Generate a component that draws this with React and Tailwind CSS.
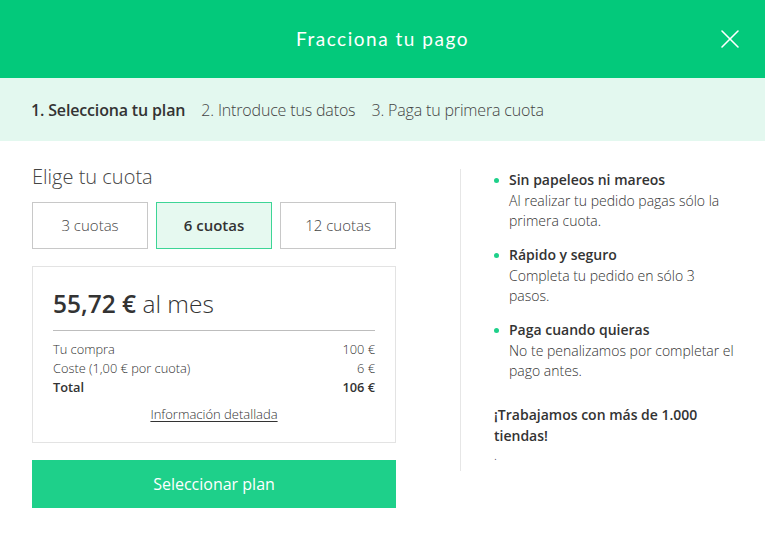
import { X } from "lucide-react";

const points = [
  {
    title: "Sin papeleos ni mareos",
    text: "Al realizar tu pedido pagas sólo la primera cuota.",
  },
  {
    title: "Rápido y seguro",
    text: "Completa tu pedido en sólo 3 pasos.",
  },
  {
    title: "Paga cuando quieras",
    text: "No te penalizamos por completar el pago antes.",
  },
];

function PlanOption({ label, active }) {
  return (
    <div
      className={
        active
          ? "flex h-[47px] w-[116px] items-center justify-center border border-[#3dd596] bg-[#e6f9f0] text-[15px] font-semibold text-[#333]"
          : "flex h-[47px] w-[116px] items-center justify-center border border-[#c8c8c8] bg-white text-[15px] font-light text-[#444]"
      }
    >
      {label}
    </div>
  );
}

function Row({ label, value, bold }) {
  return (
    <div
      className={
        "flex justify-between text-[12.8px] leading-[19px] text-[#333] " +
        (bold ? "font-semibold" : "font-light")
      }
    >
      <span>{label}</span>
      <span>{value}</span>
    </div>
  );
}

export default function App() {
  return (
    <div className="h-[545px] w-[765px] bg-white font-['Open_Sans',sans-serif] text-[#333]">
      <div className="relative flex h-[78px] items-center justify-center bg-[#03c97b]">
        <h1 className="font-['Lato',sans-serif] text-[19px] tracking-[0.08em] text-white">
          Fracciona tu pago
        </h1>
        <button className="absolute right-[19px] top-[23px] text-white">
          <X size={32} strokeWidth={1.2} />
        </button>
      </div>

      <div className="flex h-[63px] items-center gap-[16px] bg-[#e3f8ef] px-[31px] text-[16px] tracking-[-0.01em] text-[#444]">
        <span className="font-semibold text-[#333]">1. Selecciona tu plan</span>
        <span className="font-light">2. Introduce tus datos</span>
        <span className="font-light">3. Paga tu primera cuota</span>
      </div>

      <div className="flex pl-[32px] pt-[22px]">
        <div className="w-[364px]">
          <h2 className="text-[20px] font-light leading-[28px] text-[#444]">Elige tu cuota</h2>
          <div className="mt-[11px] flex justify-between">
            <PlanOption label="3 cuotas" />
            <PlanOption label="6 cuotas" active />
            <PlanOption label="12 cuotas" />
          </div>

          <div className="mt-[17px] h-[177px] border border-[#e3e3e3] px-[20px] pt-[20px]">
            <div className="border-b border-[#bdbdbd] pb-[9px] text-[24.5px] leading-[34px] text-[#333]">
              <span className="font-semibold">55,72 €</span>{" "}
              <span className="font-light">al mes</span>
            </div>
            <div className="mt-[9px]">
              <Row label="Tu compra" value="100 €" />
              <Row label="Coste (1,00 € por cuota)" value="6 €" />
              <Row label="Total" value="106 €" bold />
            </div>
            <div className="mt-[8px] text-center text-[13px] font-light">
              <a className="underline underline-offset-2">Información detallada</a>
            </div>
          </div>

          <button className="mt-[17px] h-[48px] w-full bg-[#1ed08a] text-[16px] font-medium text-white">
            Seleccionar plan
          </button>
        </div>

        <div className="ml-[64px] mt-[6px] h-[302px] border-l border-[#e6e6e6] pl-[33px] pr-[20px]">
          <ul className="flex flex-col gap-[13px]">
            {points.map((p) => (
              <li key={p.title} className="flex">
                <span className="mr-[10px] mt-[9px] h-[5px] w-[5px] shrink-0 rounded-full bg-[#1ed08a]" />
                <div className="w-[228px]">
                  <div className="text-[14px] font-semibold leading-[22px]">{p.title}</div>
                  <div className="text-[14px] font-light leading-[20px] text-[#333]">{p.text}</div>
                </div>
              </li>
            ))}
          </ul>
          <p className="mt-[23px] w-[240px] text-[14px] font-semibold leading-[21px]">
            ¡Trabajamos con más de 1.000 tiendas!
          </p>
          <p className="text-[12px] font-light leading-[20px]">.</p>
        </div>
      </div>
    </div>
  );
}
